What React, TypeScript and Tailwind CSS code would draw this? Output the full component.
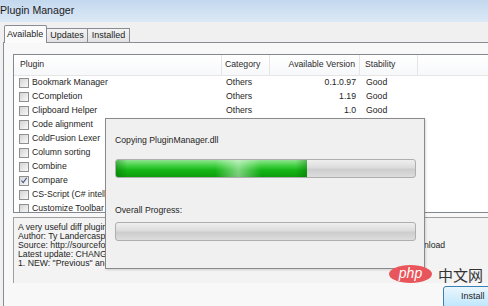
import React from "react";

const plugins = [
  { name: "Bookmark Manager", cat: "Others", ver: "0.1.0.97", stab: "Good" },
  { name: "CCompletion", cat: "Others", ver: "1.19", stab: "Good" },
  { name: "Clipboard Helper", cat: "Others", ver: "1.0", stab: "Good" },
  { name: "Code alignment", cat: "Others", ver: "1.2", stab: "Good" },
  { name: "ColdFusion Lexer", cat: "Others", ver: "1.0.1", stab: "Good" },
  { name: "Column sorting", cat: "Others", ver: "1.1", stab: "Good" },
  { name: "Combine", cat: "Others", ver: "1.0", stab: "Good" },
  { name: "Compare", cat: "Others", ver: "1.5.5", stab: "Good", checked: true },
  { name: "CS-Script (C# intellisense)", cat: "Others", ver: "1.7.8", stab: "Good" },
  { name: "Customize Toolbar", cat: "Others", ver: "4.1", stab: "Good" },
];

function CheckBox({ checked }: { checked?: boolean }) {
  return (
    <span className="relative flex items-center justify-center w-[10px] h-[10px] shrink-0 border border-[#8f8f8f] bg-gradient-to-br from-[#d4d4d4] to-[#f9f9f9]">
      {checked && (
        <svg viewBox="0 0 10 10" className="w-[9px] h-[9px]">
          <path d="M1.8 5 L4 7.6 L8.4 1.6" fill="none" stroke="#3b4f7d" strokeWidth="1.3" />
        </svg>
      )}
    </span>
  );
}

function ProgressBar({ value }: { value: number }) {
  return (
    <div className="relative h-[19px] w-[301px] rounded-[3px] border border-[#aeaeae] overflow-hidden bg-[linear-gradient(to_bottom,#efefef,#dcdcdc_45%,#cdcdcd_55%,#dddddd)]">
      {value > 0 && (
        <div
          className="relative h-full bg-[linear-gradient(to_bottom,#8fe48f_0%,#3fcf3f_35%,#16b616_60%,#0d9d0d_100%)]"
          style={{ width: `${value}%` }}
        >
          <div className="absolute inset-0 bg-[linear-gradient(to_right,rgba(0,90,0,0.35)_0%,transparent_6%,transparent_52%,rgba(255,255,255,0.45)_64%,transparent_76%,transparent_94%,rgba(0,90,0,0.35)_100%)]" />
        </div>
      )}
    </div>
  );
}

export default function App() {
  return (
    <div className="relative w-[488px] h-[306px] overflow-hidden bg-[#f0f0f0] text-[#1e1e1e] font-['Liberation_Sans',Arial,sans-serif]">
      {/* Title bar */}
      <div className="h-[22px] flex items-center bg-gradient-to-b from-[#c3d8ee] to-[#dce9f6] text-[10.6px] text-[#1a1a1a]">
        Plugin Manager
      </div>

      {/* Tabs */}
      <div className="h-[20px] flex items-end pl-[4px] text-[9px]">
        <div className="relative z-10 -mb-px h-[18px] w-[43px] flex items-center pl-[2px] border border-b-0 border-[#898c95] bg-[#fbfbfb] rounded-t-[2px]">
          Available
        </div>
        <div className="h-[14px] w-[41px] flex items-center justify-center border border-b-0 border-l-0 border-[#898c95] bg-gradient-to-b from-[#f3f3f3] to-[#e2e2e2]">
          Updates
        </div>
        <div className="h-[14px] w-[42px] flex items-center justify-center border border-b-0 border-l-0 border-[#898c95] bg-gradient-to-b from-[#f3f3f3] to-[#e2e2e2]">
          Installed
        </div>
      </div>

      {/* Tab panel */}
      <div className="ml-[3px] w-[520px] h-[270px] border-t border-l border-[#898c95] bg-[#f8f8f8] pl-[9px] pt-[11px] text-[8.7px]">
        {/* Plugin list */}
        <div className="w-[520px] h-[159px] border border-[#828790] bg-white overflow-hidden">
          <div className="h-[21px] flex border-b border-[#e5e5e5] bg-gradient-to-b from-white to-[#f7f8fa] text-[#2b2b2b]">
            <div className="w-[208px] pl-[6px] flex items-center border-r border-[#e5e5e5]">Plugin</div>
            <div className="w-[48px] pl-[3px] flex items-center border-r border-[#e5e5e5]">Category</div>
            <div className="w-[90px] pr-[4px] flex items-center justify-end border-r border-[#e5e5e5]">Available Version</div>
            <div className="w-[58px] pl-[5px] flex items-center border-r border-[#e5e5e5]">Stability</div>
          </div>
          {plugins.map((p) => (
            <div key={p.name} className="h-[14px] flex items-center">
              <div className="w-[208px] pl-[5px] flex items-center gap-[3px] whitespace-nowrap">
                <CheckBox checked={p.checked} />
                <span>{p.name}</span>
              </div>
              <div className="w-[48px] pl-[4px]">{p.cat}</div>
              <div className="w-[90px] pr-[4px] text-right">{p.ver}</div>
              <div className="w-[58px] pl-[6px]">{p.stab}</div>
            </div>
          ))}
        </div>

        {/* Description */}
        <div className="mt-[4px] h-[66px] border-t border-l border-[#a0a0a0] bg-[#f3f3f3] pl-[4px] pt-[5px] leading-[9px] whitespace-nowrap">
          <div>A very useful diff plugin to show the difference between two files.</div>
          <div>Author: Ty Landercasper</div>
          <div className="flex">
            <span className="w-[390px] shrink-0 overflow-hidden">
              Source: http://sourceforge.net/projects/npp-plugins/files/ComparePlugin/ComparePlugin%201.5.5/
            </span>
            <span>download</span>
          </div>
          <div>Latest update: CHANGES in Compare 1.5.5</div>
          <div>1. NEW: "Previous" and "Next" commands now jumping blockwise instead of linewise.</div>
        </div>

        {/* Buttons */}
        <div className="mt-[3px] pl-[430px]">
          <button className="h-[22px] w-[60px] rounded-[3px] border border-[#3c7fb1] bg-gradient-to-b from-[#eaf6fd] to-[#bee6fd] text-[9px] text-left pl-[17px]">
            Install
          </button>
        </div>
      </div>

      {/* Copying dialog */}
      <div className="absolute left-[105px] top-[118px] w-[320px] h-[151px] border border-[#8a8a8a] bg-[#f0f0f0] shadow-[1px_1px_2px_rgba(0,0,0,0.15)] pl-[9px] pt-[15px] text-[8.7px] leading-[12px]">
        <div>Copying PluginManager.dll</div>
        <div className="mt-[13px]">
          <ProgressBar value={64} />
        </div>
        <div className="mt-[26px]">Overall Progress:</div>
        <div className="mt-[6px]">
          <ProgressBar value={0} />
        </div>
      </div>

      {/* Watermark */}
      <div className="absolute left-[389px] top-[265px] flex items-center gap-[6px]">
        <div className="w-[43px] h-[18px] rounded-[50%] bg-[#e8555a] flex items-center justify-center text-white italic text-[14px] leading-none pb-[2px]">
          php
        </div>
        <div className="text-[15px] leading-none text-[#333] font-['Noto_Sans_CJK_SC',sans-serif]">中文网</div>
      </div>
    </div>
  );
}
